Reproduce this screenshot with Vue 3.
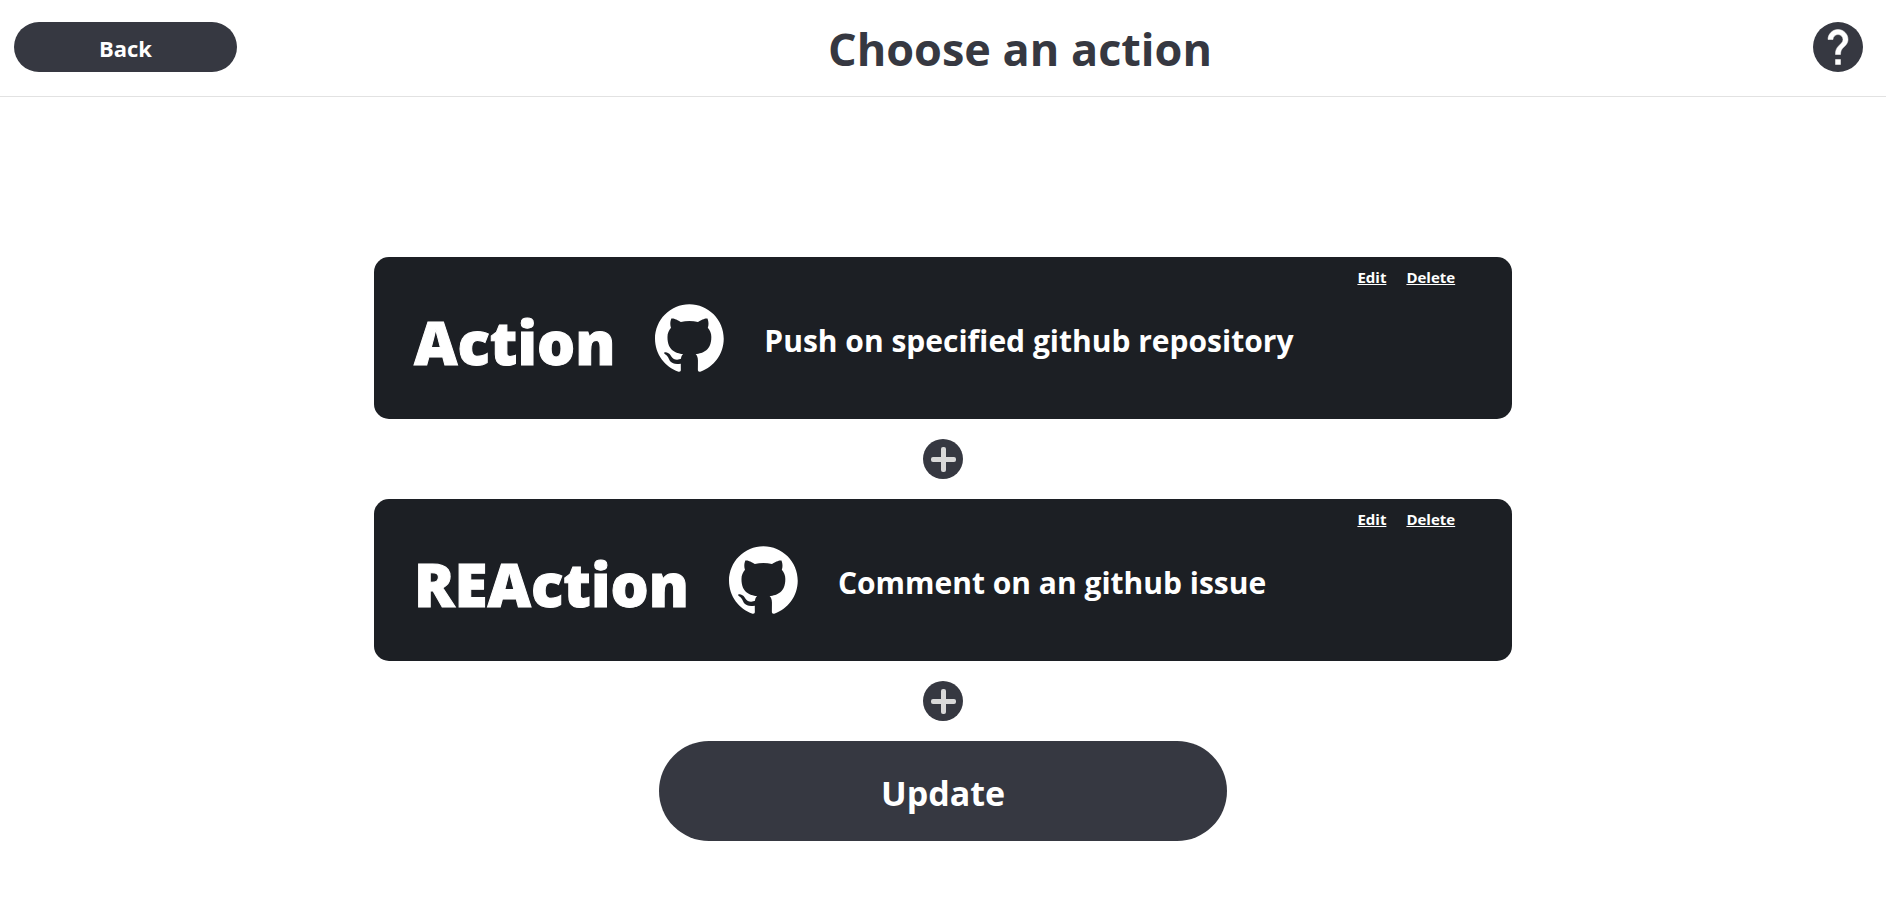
<script setup>
import { ref } from 'vue'

const steps = ref([
  { id: 1, kind: 'Action', description: 'Push on specified github repository' },
  { id: 2, kind: 'REAction', description: 'Comment on an github issue' },
])
</script>

<template>
  <div class="page">
    <header class="topbar">
      <button type="button" class="pill back">Back</button>
      <h1 class="title">Choose an action</h1>
      <button type="button" class="round help" aria-label="Help">
        <svg viewBox="2 2 20 20" width="50" height="50" aria-hidden="true">
          <path
            d="M11 17h2v2h-2zM15.07 11.25l-.9.92C13.45 12.9 13 13.5 13 15h-2v-.5c0-1.1.45-2.1 1.17-2.83l1.24-1.26c.37-.36.59-.86.59-1.41 0-1.1-.9-2-2-2s-2 .9-2 2H8c0-2.21 1.79-4 4-4s4 1.79 4 4c0 .88-.36 1.68-.93 2.25z"
          />
        </svg>
      </button>
    </header>

    <main class="flow">
      <template v-for="step in steps" :key="step.id">
        <section class="card">
          <div class="links">
            <button type="button" class="link">Edit</button>
            <button type="button" class="link">Delete</button>
          </div>
          <h2 class="kind">{{ step.kind }}</h2>
          <svg class="logo" viewBox="0 0 98 96" width="69" height="68" role="img" aria-label="GitHub">
            <path
              d="M48.854 0C21.839 0 0 22 0 49.217c0 21.756 13.993 40.172 33.405 46.69 2.427.49 3.316-1.059 3.316-2.362 0-1.141-.08-5.052-.08-9.127-13.59 2.934-16.42-5.867-16.42-5.867-2.184-5.704-5.42-7.17-5.42-7.17-4.448-3.015.324-3.015.324-3.015 4.934.326 7.523 5.052 7.523 5.052 4.367 7.496 11.404 5.378 14.235 4.074.404-3.178 1.699-5.378 3.074-6.6-10.839-1.141-22.243-5.378-22.243-24.283 0-5.378 1.94-9.778 5.014-13.2-.485-1.222-2.184-6.275.486-13.038 0 0 4.125-1.304 13.426 5.052a46.97 46.97 0 0 1 12.214-1.63c4.125 0 8.33.571 12.213 1.63 9.302-6.356 13.427-5.052 13.427-5.052 2.67 6.763.97 11.816.485 13.038 3.155 3.422 5.015 7.822 5.015 13.2 0 18.905-11.404 23.06-22.324 24.283 1.78 1.548 3.316 4.481 3.316 9.126 0 6.6-.08 11.897-.08 13.526 0 1.304.89 2.853 3.316 2.364 19.412-6.52 33.405-24.935 33.405-46.691C97.707 22 75.788 0 48.854 0z"
            />
          </svg>
          <p class="description">{{ step.description }}</p>
        </section>
        <button type="button" class="round add" aria-label="Add a step">
          <svg viewBox="0 0 40 40" width="40" height="40" aria-hidden="true">
            <rect x="8" y="18" width="25" height="5" rx="2" />
            <rect x="18" y="8" width="5" height="25" rx="2" />
          </svg>
        </button>
      </template>
      <button type="button" class="pill update">Update</button>
    </main>
  </div>
</template>

<style>
body {
  margin: 0;
  background: #fff;
}
</style>

<style scoped>
.page {
  min-height: 100vh;
  font-family: "Open Sans", "Noto Sans", sans-serif;
  font-weight: 700;
  color: #363841;
}

.page * {
  box-sizing: border-box;
}

button {
  margin: 0;
  padding: 0;
  border: 0;
  background: none;
  font: inherit;
  color: #fff;
  cursor: pointer;
}

.topbar {
  display: flex;
  align-items: center;
  justify-content: space-between;
  padding: 22px 23px 24px 14px;
  border-bottom: 1px solid #e2e2e2;
}

.title {
  margin: 0;
  padding-top: 4px;
  font-size: 45px;
  line-height: 46px;
}

.pill {
  border-radius: 50px;
  background: #363841;
}

.back {
  width: 223px;
  height: 50px;
  padding-top: 2px;
  font-size: 22px;
}

.round {
  display: block;
  flex: none;
  border-radius: 50%;
  background: #363841;
}

.round svg {
  display: block;
}

.help {
  width: 50px;
  height: 50px;
  margin-left: 10px;
  fill: #fff;
  stroke: #fff;
  stroke-width: 0.2;
}

.add {
  width: 40px;
  height: 40px;
  fill: #d9d9d9;
}

.flow {
  display: flex;
  flex-direction: column;
  align-items: center;
  gap: 20px;
  padding: 160px 0 40px;
}

.card {
  position: relative;
  display: flex;
  align-items: center;
  gap: 40px;
  width: 60.35%;
  min-height: 162px;
  padding: 0 40px;
  border-radius: 15px;
  background: #1c1f24;
  color: #fff;
}

.links {
  position: absolute;
  top: 10px;
  right: 5%;
  display: flex;
  gap: 20px;
}

.link {
  font-size: 15px;
  line-height: 20px;
  text-decoration: underline;
  text-decoration-thickness: 1px;
}

.kind {
  margin: 0;
  padding-top: 8px;
  font-size: 60px;
  font-weight: 800;
  line-height: 80px;
  -webkit-text-stroke: 1px #fff;
}

.logo {
  flex: none;
  fill: #fff;
}

.description {
  margin: 0;
  padding-top: 6px;
  font-size: 30px;
  line-height: 40px;
}

.update {
  width: 30.15%;
  min-height: 100px;
  padding-top: 4px;
  font-size: 34px;
}
</style>
